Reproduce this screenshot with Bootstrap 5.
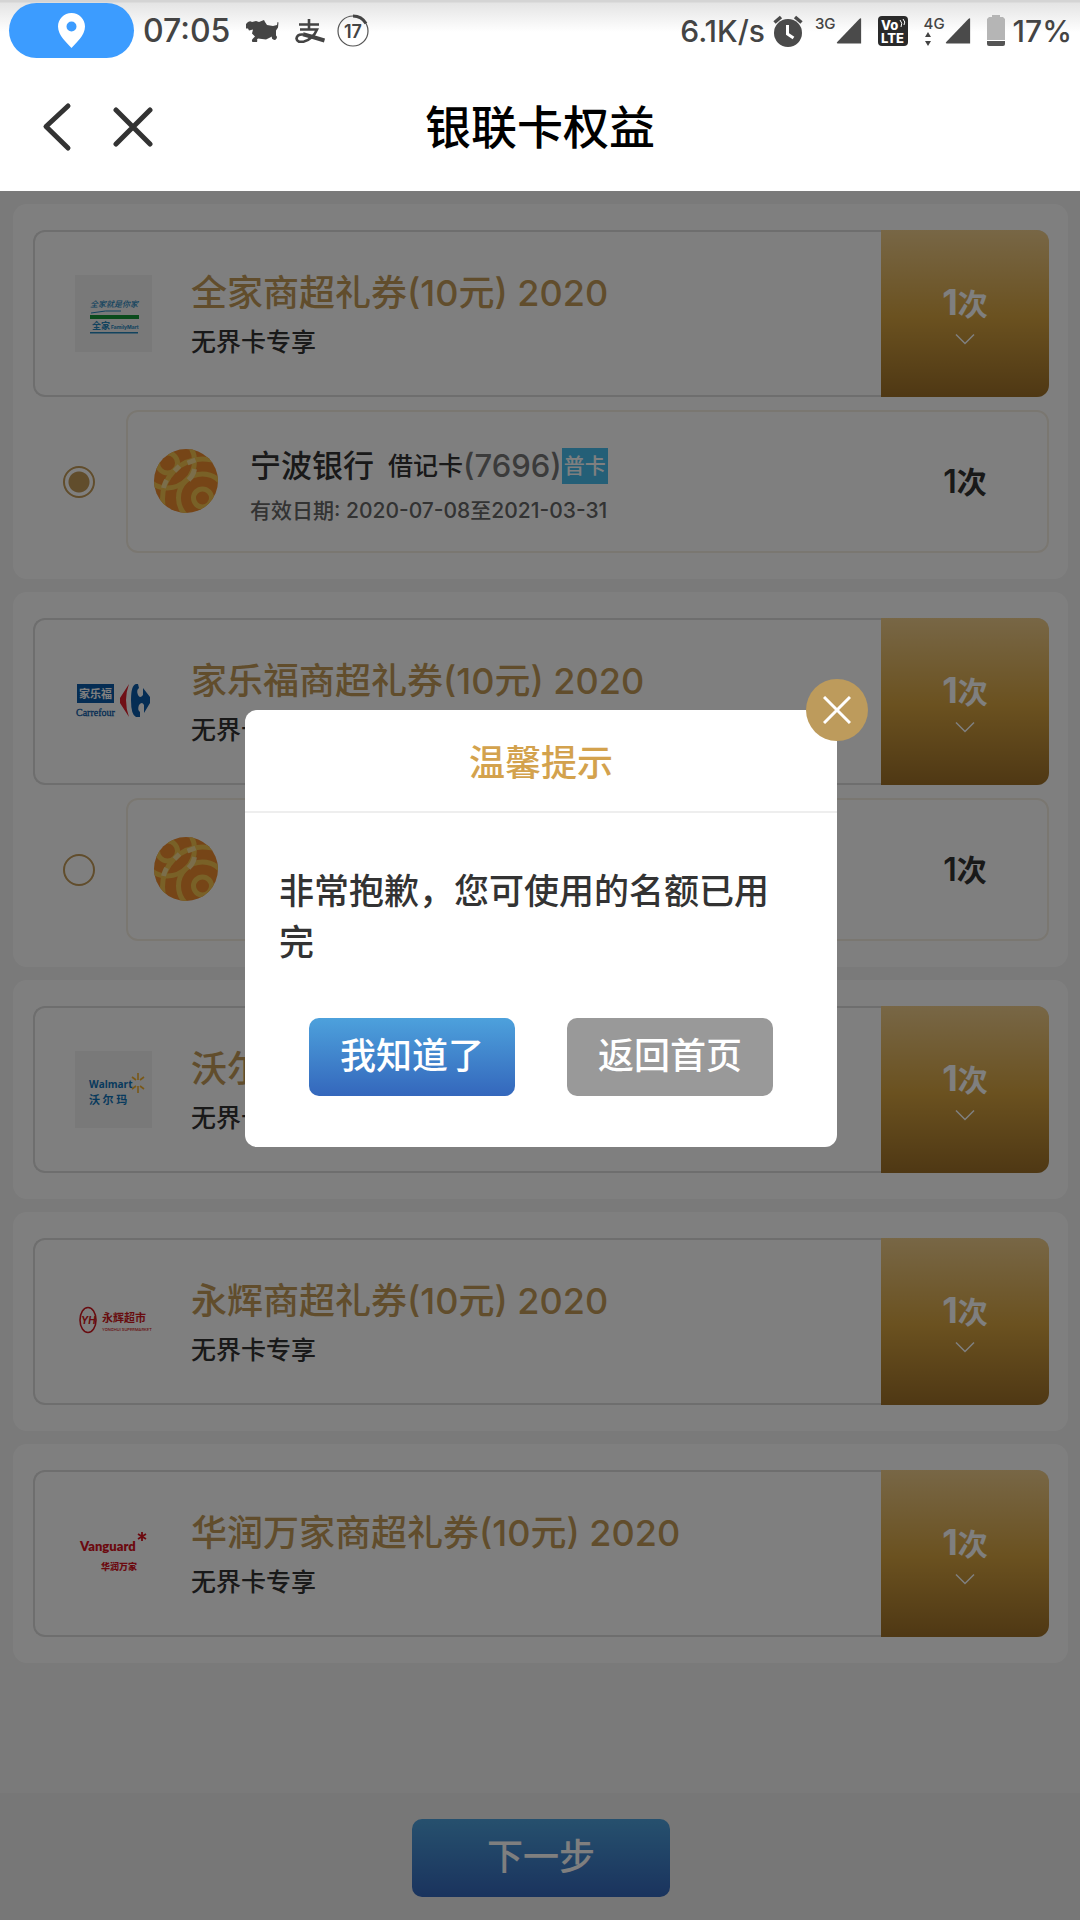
<!DOCTYPE html>
<html lang="zh-CN">
<head>
<meta charset="utf-8">
<meta name="viewport" content="width=device-width, initial-scale=1">
<title>银联卡权益</title>
<link href="https://cdn.jsdelivr.net/npm/bootstrap@5.3.0/dist/css/bootstrap.min.css" rel="stylesheet">
<style>
  :root { --gold: #c29a58; --ink: #333; }
  body { font-family: Inter, "Noto Sans CJK SC", sans-serif; font-weight: 500; color: var(--ink); background: #f4f4f4; }
  svg { display: block; flex: none; }

  .status-bar { height: 60px; padding: 3px 8px 2px 9px; color: #444; font-size: 30px; line-height: 46px;
    background: linear-gradient(#d4d4d4 0, #d4d4d4 2px, #e4e4e4 3px, #fff 32px); }
  .status-bar .locate-pill { width: 125px; height: 55px; background: #3c9cff; }
  .status-bar .clock { font-size: 32px; margin-left: 9px; }
  .net-label { font-size: 15px; line-height: 16px; }

  .title-bar { height: 131px; padding: 3px 40px 0; }
  .title-bar h1 { font-size: 46px; line-height: 60px; font-weight: 500; color: #000; }
  .title-bar .side { flex: 1 1 0; gap: 39px; }

  .coupon-list { padding: 13px 12px 13px 13px; gap: 13px; }
  .coupon { border-radius: 14px; padding: 26px 19px 26px 20px; gap: 13px; }
  .coupon-head { height: 167px; border: 2px solid #dcdcdc; border-right: 0; border-radius: 12px; padding-left: 40px; gap: 39px; }
  .coupon-head h2 { font-size: 36px; line-height: 54px; font-weight: 500; color: var(--gold); margin-bottom: 3px; }
  .coupon-head p { font-size: 25px; line-height: 38px; color: var(--ink); }
  .times-btn { width: 168px; margin: -2px 0; border: 0; border-radius: 0 12px 12px 0; color: #fff; gap: 8px; padding-bottom: 2px;
    background: linear-gradient(#f0ce8c, #d6a340 52%, #9e7028); }
  .times { font-size: 30px; line-height: 42px; font-weight: 700; white-space: nowrap; }
  .times b { font-size: 36px; font-weight: 700; }
  .times-plain { width: 168px; margin-right: -2px; }
  .times-plain b { font-size: 32px; font-weight: 600; }

  .bank-row .radio-cell { width: 93px; padding-left: 30px; }
  .bank-row .form-check-input { width: 32px; height: 32px; margin: 0; border: 2px solid var(--gold); background: #fff; box-shadow: none; }
  .bank-row .form-check-input:checked { background: radial-gradient(circle, var(--gold) 10px, #fff 11px); }
  .bank-card { height: 143px; border: 2px solid #f5efe3; border-radius: 12px; padding-left: 25px; gap: 31px; cursor: pointer; }
  .bank-text { padding-top: 9px; }
  .bank-name { font-size: 31px; line-height: 42px; }
  .bank-kind { font-size: 25px; margin-left: 14px; }
  .bank-tail { color: #777; }
  .grade { font-size: 21px; line-height: 36px; padding: 0 2px; color: #fff; background: #48bfef; }
  .valid { font-size: 21px; line-height: 32px; color: #666; margin-top: 8px; }

  .blue-btn, .grey-btn { border: 0; border-radius: 10px; font-size: 36px; line-height: 54px; font-weight: 500; color: #fff; padding: 11px 0 13px; }
  .blue-btn { background: linear-gradient(#4da1dc, #3467bc); }
  .grey-btn { background: #999; }
  .next-bar { background: #eee; padding: 26px 0 23px 2px; }
  .next-bar .blue-btn { width: 258px; }

  .shade { inset: 0; background: rgba(0,0,0,.5); padding: 519px 0 0 2px; }
  .tip { width: 592px; border-radius: 12px; background: #fff; }
  .tip h2 { font-size: 36px; line-height: 54px; font-weight: 500; color: #d3a24d; padding: 26px 0 21px; border-bottom: 2px solid #eee; }
  .tip p { font-size: 35px; line-height: 51px; padding: 53px 34px 50px; }
  .tip .actions { gap: 52px; padding-bottom: 51px; }
  .tip .actions button { width: 206px; }
  .tip .close-tip { right: -31px; top: -31px; width: 62px; height: 62px; border: 0; background: #bd9b5c; }
</style>
</head>
<body>
<svg width="0" height="0" class="position-absolute" aria-hidden="true">
  <symbol id="chev" viewBox="0 0 20 12"><path d="M1 1.500 10 10.500 19 1.500" fill="none" stroke="#fff" stroke-width="1.500"/></symbol>
  <symbol id="signal" viewBox="0 0 29 30"><path d="M28 1v28H2q-2 0-.6-1.600L26 1.600Q27.500.2 28 1z" fill="#4a4a4a"/></symbol>
  <symbol id="bank" viewBox="0 0 65 65">
    <clipPath id="disc"><circle cx="32.500" cy="32" r="32"/></clipPath>
    <g clip-path="url(#disc)" fill="none" stroke="#f2c24e" stroke-width="5">
      <path d="M0 0h65v65H0z" fill="#ec8a2e" stroke="none"/>
      <circle cx="14" cy="14" r="10"/>
      <circle cx="14" cy="12" r="27"/>
      <circle cx="49" cy="49" r="9"/>
      <circle cx="49" cy="49" r="24"/>
      <circle cx="49" cy="50" r="40"/>
      <path d="M10 39q1-4 3-8M35 31q5-5 6-11M34 14l8-3M21 22l5-5" stroke="#f6dc96"/>
    </g>
  </symbol>
</svg>

<div class="min-vh-100 d-flex flex-column">
  <header class="bg-white">
    <div class="status-bar d-flex justify-content-between">
      <div class="d-flex align-items-center">
        <span class="locate-pill rounded-pill d-flex align-items-center justify-content-center">
          <svg width="27" height="35" viewBox="0 0 27 35"><path fill="#fff" fill-rule="evenodd" d="M13.500 0C6 0 0 6 0 13.500c0 9 9 16.500 13.500 21.500C18 30 27 22.500 27 13.500 27 6 21 0 13.500 0zm0 8.500a5 5 0 1 1 0 10 5 5 0 0 1 0-10z"/></svg>
        </span>
        <span class="clock">07:05</span>
        <svg class="ms-3" width="33" height="23" viewBox="0 0 33 23"><path fill="#444" d="M0 5q3-4 6-2l4-1 3 1 5-2 1 2 2 3 6 1 4-1 .5-3 1 .5-.5 5-2 3v5a2.500 2.500 0 1 1-4 1l-6 3-8-1-1 1a2.600 2.600 0 1 1-4-1l2-2-3-3 1-4-4 1-1-2-2 0z"/></svg>
        <svg class="ms-3" width="30" height="24" viewBox="0 0 30 24"><g fill="none" stroke="#444" stroke-width="2.600"><path d="M4 5.500h20M14 0v10M5 10.500h17Q18 20 9 22.500 2 24 1.500 19.500 2 15 8 15.500"/><path d="M8 15.300Q18 18 29.500 21.500" stroke-width="4"/></g></svg>
        <svg class="ms-2" width="40" height="34" viewBox="0 0 40 34"><circle cx="20" cy="17" r="15" fill="none" stroke="#555" stroke-width="1.200"/><path d="M20 2a15 15 0 0 1 13 7.500" fill="none" stroke="#444" stroke-width="3"/><text x="20" y="23.500" text-anchor="middle" font-size="18" font-weight="600" fill="#444">17</text></svg>
      </div>
      <div class="d-flex align-items-center">
        <span>6.1K/s</span>
        <svg class="ms-2" width="30" height="32" viewBox="0 0 30 32"><circle cx="15" cy="18" r="14" fill="#4a4a4a"/><path d="M1.500 7.500 8 2M28.500 7.500 22 2" stroke="#4a4a4a" stroke-width="3.500"/><path d="M14.500 10v9l6 4" fill="none" stroke="#fff" stroke-width="3"/></svg>
        <div class="d-flex ms-2 ps-1">
          <span class="net-label">3G</span>
          <svg width="26" height="30"><use href="#signal"/></svg>
        </div>
        <svg class="ms-3" width="30" height="30" viewBox="0 0 30 30"><rect width="30" height="30" rx="4" fill="#2a2a2a"/><g fill="#fff" font-weight="800"><text x="3" y="14" font-size="13">Vo</text><text x="3" y="27" font-size="13">LTE</text></g><path d="M22 4q3 3 1 7M25 3q3 3 1 6" fill="none" stroke="#fff"/></svg>
        <div class="d-flex ms-3">
          <div class="d-flex flex-column">
            <span class="net-label">4G</span>
            <svg width="8" height="14" viewBox="0 0 8 14"><path d="M4 0l3 5H1zM4 14l3-5H1z" fill="#444"/></svg>
          </div>
          <svg width="26" height="30"><use href="#signal"/></svg>
        </div>
        <svg class="ms-3" width="18" height="31" viewBox="0 0 18 31"><path d="M5 0h8v2h3l2 2v21H0V4l2-2h3z" fill="#b5b5b5"/><path d="M0 26h18v3q0 2-2 2H2q-2 0-2-2z" fill="#555"/></svg>
        <span class="ms-2">17%</span>
      </div>
    </div>
    <div class="title-bar d-flex align-items-center">
      <div class="side d-flex align-items-center">
        <a href="#" aria-label="返回"><svg width="34" height="50" viewBox="0 0 34 50"><path d="M28 4 6 24.500 28 46" fill="none" stroke="#333" stroke-width="5" stroke-linecap="round" stroke-linejoin="round"/></svg></a>
        <a href="#" aria-label="关闭"><svg width="40" height="42" viewBox="0 0 40 42"><path d="M3 4l34 34M37 4 3 38" stroke="#333" stroke-width="5" stroke-linecap="round"/></svg></a>
      </div>
      <h1 class="m-0">银联卡权益</h1>
      <div class="side"></div>
    </div>
  </header>

  <main class="position-relative flex-grow-1 d-flex flex-column">
    <div class="coupon-list d-flex flex-column">
      <section class="coupon bg-white d-flex flex-column">
        <div class="coupon-head d-flex align-items-center">
          <svg width="77" height="77" viewBox="0 0 77 77"><rect width="77" height="77" fill="#f2f2f2"/><g fill="#2486bd"><text x="15" y="32" font-size="8" font-style="italic">全家就是你家</text><path d="M16 38q14-3 30-2" stroke="#2486bd" fill="none"/><text x="17" y="54" font-size="9" font-weight="700">全家</text><text x="36" y="54" font-size="5" font-weight="700">FamilyMart</text><path d="M15 57h48v1.500H15z"/></g><path d="M15 40h49v4H15z" fill="#149638"/></svg>
          <div class="flex-grow-1"><h2>全家商超礼券(10元) 2020</h2><p class="m-0">无界卡专享</p></div>
          <button type="button" class="times-btn align-self-stretch d-flex flex-column align-items-center justify-content-center"><span class="times"><b>1</b>次</span><svg width="20" height="12"><use href="#chev"/></svg></button>
        </div>
        <div class="bank-row d-flex align-items-center">
          <div class="radio-cell d-flex"><input class="form-check-input" type="radio" name="card" id="card-a" checked aria-label="全家 宁波银行"></div>
          <label class="bank-card flex-grow-1 d-flex align-items-center" for="card-a">
            <svg width="66" height="65"><use href="#bank"/></svg>
            <span class="bank-text flex-grow-1">
              <span class="bank-name d-flex align-items-center">宁波银行<span class="bank-kind">借记卡</span><span class="bank-tail">(7696)</span><span class="grade">普卡</span></span>
              <span class="valid d-block">有效日期: 2020-07-08至2021-03-31</span>
            </span>
            <span class="times times-plain text-center"><b>1</b>次</span>
          </label>
        </div>
      </section>

      <section class="coupon bg-white d-flex flex-column">
        <div class="coupon-head d-flex align-items-center">
          <svg width="77" height="77" viewBox="0 0 77 77"><path d="M2 21h37v19H2z" fill="#0a5aa8"/><text x="4" y="35" font-size="11" font-weight="700" fill="#fff">家乐福</text><text x="1" y="53" font-size="10" font-family="Liberation Serif, serif" fill="#0a5aa8" stroke="#0a5aa8" stroke-width=".3">Carrefour</text><path d="M54 21 45 35v5l9 14q-6-17 0-33z" fill="#e0202c"/><path d="M61 21q-5 1-5 16t5 17h4v-5q-3-2-1-7 3-4 5 0v8l6-10v-6l-7-9v7q-3 4-5 0-2-5 1-7l-1-4z" fill="#0a5aa8"/></svg>
          <div class="flex-grow-1"><h2>家乐福商超礼券(10元) 2020</h2><p class="m-0">无界卡专享</p></div>
          <button type="button" class="times-btn align-self-stretch d-flex flex-column align-items-center justify-content-center"><span class="times"><b>1</b>次</span><svg width="20" height="12"><use href="#chev"/></svg></button>
        </div>
        <div class="bank-row d-flex align-items-center">
          <div class="radio-cell d-flex"><input class="form-check-input" type="radio" name="card" id="card-b" aria-label="家乐福 宁波银行"></div>
          <label class="bank-card flex-grow-1 d-flex align-items-center" for="card-b">
            <svg width="66" height="65"><use href="#bank"/></svg>
            <span class="flex-grow-1"></span>
            <span class="times times-plain text-center"><b>1</b>次</span>
          </label>
        </div>
      </section>

      <section class="coupon bg-white">
        <div class="coupon-head d-flex align-items-center">
          <svg width="77" height="77" viewBox="0 0 77 77"><rect width="77" height="77" fill="#f2f2f2"/><g fill="#0f74ba" font-weight="700"><text x="14" y="37" font-size="10" font-family="Open Sans, sans-serif">Walmart</text><text x="14" y="53" font-size="11" xml:space="preserve">沃 尔 玛</text></g><path d="M63 22v7M63 35v7M57 26l4 3M69 26l-4 3M57 38l4-3M69 38l-4-3" stroke="#f2b02e" stroke-width="1.600"/></svg>
          <div class="flex-grow-1"><h2>沃尔玛</h2><p class="m-0">无界卡专享</p></div>
          <button type="button" class="times-btn align-self-stretch d-flex flex-column align-items-center justify-content-center"><span class="times"><b>1</b>次</span><svg width="20" height="12"><use href="#chev"/></svg></button>
        </div>
      </section>

      <section class="coupon bg-white">
        <div class="coupon-head d-flex align-items-center">
          <svg width="77" height="77" viewBox="0 0 77 77"><g fill="#d01820"><ellipse cx="13" cy="37" rx="8" ry="12.500" fill="none" stroke="#d01820" stroke-width="1.600"/><text x="6" y="41" font-size="10" font-weight="700" font-style="italic">YH</text><text x="27" y="39" font-size="11" font-weight="700">永辉超市</text><text x="27" y="48" font-size="4">YONGHUI SUPERMARKET</text></g></svg>
          <div class="flex-grow-1"><h2>永辉商超礼券(10元) 2020</h2><p class="m-0">无界卡专享</p></div>
          <button type="button" class="times-btn align-self-stretch d-flex flex-column align-items-center justify-content-center"><span class="times"><b>1</b>次</span><svg width="20" height="12"><use href="#chev"/></svg></button>
        </div>
      </section>

      <section class="coupon bg-white">
        <div class="coupon-head d-flex align-items-center">
          <svg width="77" height="77" viewBox="0 0 77 77"><g fill="#d8141f" font-weight="800"><text x="5" y="36" font-size="13" font-family="Lato, sans-serif">Vanguard</text><text x="26" y="55" font-size="9">华润万家</text></g><path d="M67 17v9M63 19l8 5M71 19l-8 5" stroke="#d8141f" stroke-width="1.800"/></svg>
          <div class="flex-grow-1"><h2>华润万家商超礼券(10元) 2020</h2><p class="m-0">无界卡专享</p></div>
          <button type="button" class="times-btn align-self-stretch d-flex flex-column align-items-center justify-content-center"><span class="times"><b>1</b>次</span><svg width="20" height="12"><use href="#chev"/></svg></button>
        </div>
      </section>
    </div>

    <div class="next-bar mt-auto d-flex justify-content-center"><button type="button" class="blue-btn">下一步</button></div>

    <div class="shade position-absolute d-flex justify-content-center align-items-start">
      <div class="tip position-relative" role="dialog" aria-labelledby="tip-title">
        <button type="button" class="close-tip position-absolute rounded-circle d-flex align-items-center justify-content-center p-0" aria-label="关闭"><svg width="28" height="28" viewBox="0 0 28 28"><path d="M1 1l26 26M27 1 1 27" stroke="#fff" stroke-width="3"/></svg></button>
        <h2 id="tip-title" class="text-center m-0">温馨提示</h2>
        <p class="m-0">非常抱歉，您可使用的名额已用完</p>
        <div class="actions d-flex justify-content-center">
          <button type="button" class="blue-btn">我知道了</button>
          <button type="button" class="grey-btn">返回首页</button>
        </div>
      </div>
    </div>
  </main>
</div>
<script src="https://cdn.jsdelivr.net/npm/bootstrap@5.3.0/dist/js/bootstrap.bundle.min.js"></script>
</body>
</html>
